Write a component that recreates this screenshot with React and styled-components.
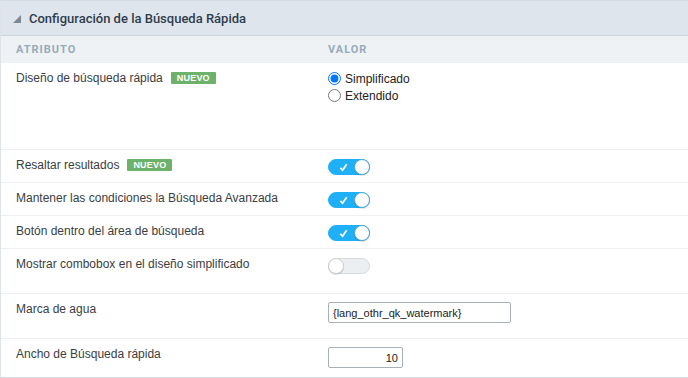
import React from "react";
import styled, { createGlobalStyle } from "styled-components";

const Global = createGlobalStyle`
  html, body {
    margin: 0;
    padding: 0;
    background: #ffffff;
    font-family: "Liberation Sans", Arial, sans-serif;
  }
`;

const rows = [
  { label: "Resaltar resultados", badge: true, on: true, height: "33px" },
  { label: "Mantener las condiciones la Búsqueda Avanzada", on: true, height: "33px" },
  { label: "Botón dentro del área de búsqueda", on: true, height: "33px" },
  { label: "Mostrar combobox en el diseño simplificado", on: false, height: "45px" },
];

const App = () => {
  return (
    <>
      <Global />
      <Panel>
        <Header>
          <Caret viewBox="0 0 8 8">
            <polygon points="8,0 8,8 0,8" />
          </Caret>
          <Title>Configuración de la Búsqueda Rápida</Title>
        </Header>
        <Table>
          <HeadRow>
            <Col>ATRIBUTO</Col>
            <Col>VALOR</Col>
          </HeadRow>

          <Row $height="87px">
            <Label>
              Diseño de búsqueda rápida
              <Badge>NUEVO</Badge>
            </Label>
            <Radios>
              <RadioLine>
                <input type="radio" name="qs" defaultChecked />
                Simplificado
              </RadioLine>
              <RadioLine>
                <input type="radio" name="qs" />
                Extendido
              </RadioLine>
            </Radios>
          </Row>

          {rows.map((r) => (
            <Row key={r.label} $height={r.height}>
              <Label>
                {r.label}
                {r.badge && <Badge>NUEVO</Badge>}
              </Label>
              <Switch $on={r.on}>
                {r.on && (
                  <Check viewBox="0 0 10 10">
                    <path d="M1.5 5.5 L4 8 L8.5 1.5" />
                  </Check>
                )}
                <Knob $on={r.on} />
              </Switch>
            </Row>
          ))}

          <Row $height="45px">
            <Label>Marca de agua</Label>
            <TextInput type="text" defaultValue="{lang_othr_qk_watermark}" $width="183px" />
          </Row>
          <Row $height="40px" $last>
            <Label>Ancho de Búsqueda rápida</Label>
            <TextInput type="text" defaultValue="10" $width="75px" $right />
          </Row>
        </Table>
      </Panel>
    </>
  );
};

export default App;

const Panel = styled.div`
  width: 688px;
  border-left: 1px solid #dde3e9;
  box-sizing: border-box;
`;

const Header = styled.div`
  height: 36px;
  box-sizing: border-box;
  background: #dfe5ec;
  border-top: 1px solid #d4dce3;
  border-bottom: 1px solid #cdd6de;
  display: flex;
  align-items: center;
  padding-left: 12px;
  gap: 8px;
`;

const Caret = styled.svg`
  width: 8px;
  height: 8px;
  fill: #7d8995;
  margin-top: 1px;
`;

const Title = styled.div`
  font-family: Roboto, "Liberation Sans", sans-serif;
  font-size: 13px;
  font-weight: 500;
  color: #2f3d4c;
`;

const Table = styled.div`
  display: flex;
  flex-direction: column;
`;

const HeadRow = styled.div`
  display: grid;
  grid-template-columns: 312px 1fr;
  height: 26px;
  align-items: center;
  background: #eef2f5;
  padding-left: 15px;
`;

const Col = styled.div`
  font-family: Roboto, "Liberation Sans", sans-serif;
  font-size: 11px;
  font-weight: 700;
  letter-spacing: 1px;
  color: #97abbb;
`;

const Row = styled.div`
  display: grid;
  grid-template-columns: 312px 1fr;
  align-items: start;
  padding: 8px 0 0 15px;
  height: ${(p) => p.$height};
  box-sizing: border-box;
  border-top: 1px solid #edf0f3;
  border-bottom: ${(p) => (p.$last ? "1px solid #d3dae1" : "none")};
`;

const Label = styled.div`
  font-size: 12px;
  color: #3a3d42;
  line-height: 14px;
  display: flex;
  align-items: center;
`;

const Badge = styled.span`
  display: inline-block;
  margin-left: 8px;
  background: #6cb26b;
  color: #ffffff;
  font-size: 9px;
  font-weight: 700;
  line-height: 12px;
  padding: 0 6px;
  border-radius: 1px;
  letter-spacing: 0.2px;
`;

const Radios = styled.div`
  display: flex;
  flex-direction: column;
  margin-top: -1px;
`;

const RadioLine = styled.label`
  display: flex;
  align-items: center;
  font-size: 12px;
  color: #222;
  height: 17px;

  input {
    margin: 0 4px 0 0;
    width: 13px;
    height: 13px;
  }
`;

const Switch = styled.div`
  position: relative;
  width: 42px;
  height: 16px;
  margin-top: 1px;
  border-radius: 9px;
  box-sizing: border-box;
  background: ${(p) => (p.$on ? "#1fb0f7" : "#eceff2")};
  border: 1px solid ${(p) => (p.$on ? "#1fb0f7" : "#d7dde2")};
`;

const Check = styled.svg`
  position: absolute;
  left: 10px;
  top: 3px;
  width: 9px;
  height: 9px;
  fill: none;
  stroke: #ffffff;
  stroke-width: 2;
`;

const Knob = styled.div`
  position: absolute;
  top: -1px;
  ${(p) => (p.$on ? "right: -1px;" : "left: -1px;")}
  width: 16px;
  height: 16px;
  border-radius: 50%;
  background: #ffffff;
  box-sizing: border-box;
  border: 1px solid ${(p) => (p.$on ? "#4aa9d8" : "#c9cfd4")};
  box-shadow: 0 1px 1px rgba(0, 0, 0, 0.12);
`;

const TextInput = styled.input`
  width: ${(p) => p.$width};
  height: 21px;
  box-sizing: border-box;
  border: 1px solid #a9b0b8;
  border-radius: 2px;
  padding: 0 4px;
  font-family: "Liberation Sans", Arial, sans-serif;
  font-size: 11px;
  color: #222;
  text-align: ${(p) => (p.$right ? "right" : "left")};
`;
